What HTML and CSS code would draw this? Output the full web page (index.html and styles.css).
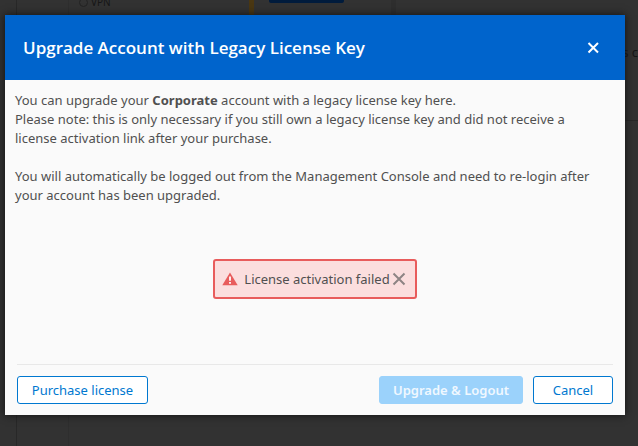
FILE: index.html
```html
<!DOCTYPE html>
<html lang="en">
<head>
<meta charset="utf-8">
<title>Upgrade Account</title>
<link rel="stylesheet" href="styles.css">
</head>
<body>
<div class="page" inert>
  <div class="rail"></div>
  <div class="tree"></div>
  <div class="options"><label class="option"><input type="radio" name="kind">VPN</label></div>
  <div class="accent"></div>
  <div class="card"><div class="card-bar"></div></div>
  <div class="gutter"></div>
  <div class="details"><p class="details-text">s c</p></div>
</div>
<div class="overlay">
  <section class="dialog" role="dialog" aria-modal="true" aria-labelledby="dialog-title">
    <header class="dialog-header">
      <h1 class="dialog-title" id="dialog-title">Upgrade Account with Legacy License Key</h1>
      <button class="icon-button" type="button" aria-label="Close">
        <svg width="12" height="12" viewBox="0 0 12 12"><path d="M1.5 1l9.5 9.5M11 1L1.5 10.5" fill="none" stroke="#fff" stroke-width="2"/></svg>
      </button>
    </header>
    <div class="dialog-body">
      <p>You can upgrade your <strong>Corporate</strong> account with a legacy license key here.<br>Please note: this is only necessary if you still own a legacy license key and did not receive a license activation link after your purchase.</p>
      <p>You will automatically be logged out from the Management Console and need to re-login after your account has been upgraded.</p>
      <div class="alert" role="alert">
        <svg width="16" height="14" viewBox="0 0 16 14"><path d="M8 .5L15.7 13.3H.3z" fill="#e85c5c"/><path d="M8 4.5v4.2M8 10v1.8" stroke="#fff" stroke-width="1.8"/></svg>
        <span class="alert-text">License activation failed</span>
        <button class="icon-button" type="button" aria-label="Dismiss">
          <svg width="14" height="14" viewBox="0 0 14 14"><path d="M1.5 1.5l11 11M12.5 1.5l-11 11" fill="none" stroke="#8d8484" stroke-width="2"/></svg>
        </button>
      </div>
    </div>
    <footer class="dialog-footer">
      <button class="button purchase" type="button">Purchase license</button>
      <button class="button primary" type="button" disabled>Upgrade &amp; Logout</button>
      <button class="button cancel" type="button">Cancel</button>
    </footer>
  </section>
</div>
</body>
</html>
```
FILE: styles.css
```css
* { box-sizing: border-box; }
body {
  margin: 0;
  min-height: 100vh;
  display: grid;
  background: #323232;
  color: #505050;
  font: 13px/19px "Noto Sans", "Open Sans", sans-serif;
}
.page, .overlay { grid-area: 1 / 1; }
.page {
  display: grid;
  grid-template-columns: 17px 52px 180px 5px 137px 5px 1fr;
}
.rail { border-right: 1px solid #282828; }
.tree { border-right: 1px solid #2e2e2e; }
.options { padding: 0 10px; height: 15px; }
.option { display: flex; align-items: center; gap: 3px; height: 4px; font-size: 10px; color: #161616; }
.option input { appearance: none; width: 9px; height: 9px; margin: 0; border: 1px solid #222; border-radius: 50%; }
.accent { height: 15px; background: #4a3712; }
.card { height: 15px; padding: 0 15px; }
.card-bar { width: 75px; height: 3px; background: #001b3c; border-radius: 0 0 2px 2px; }
.gutter { height: 15px; background: #2e2e2e; }
.details { height: 121px; padding-top: 43px; text-align: right; border-bottom: 1px solid #282828; }
.details-text { margin: 0; color: #161616; }
.overlay { padding: 15px 13px 31px 5px; }
.dialog { background: #fafafa; box-shadow: 0 0 8px #111; display: flex; flex-direction: column; height: 100%; }
.dialog-header {
  display: flex;
  align-items: center;
  justify-content: space-between;
  padding: 20px 26px 20px 18px;
  background: #0064cc;
  color: #fff;
}
.dialog-title { margin: 0; font-family: "Open Sans", sans-serif; font-size: 17px; line-height: 25px; font-weight: 600; }
.icon-button { display: flex; padding: 0; border: 0; background: none; }
.dialog-body { flex: 1; display: flex; flex-direction: column; padding: 11px 10px; }
.dialog-body p { margin: 0 0 19px; padding-right: 12px; }
.alert {
  align-self: center;
  display: flex;
  align-items: center;
  margin-top: 35px;
  padding: 0 9px 0 7px;
  height: 40px;
  border: 2px solid #e85c5c;
  border-radius: 3px;
  background: #fbdede;
}
.alert-text { margin: 0 2px 0 6px; }
.dialog-footer {
  display: flex;
  gap: 10px;
  margin: 0 12px;
  padding: 11px 0;
  border-top: 1px solid #e8e8e8;
}
.button {
  height: 28px;
  padding: 0;
  border: 1px solid #0078d0;
  border-radius: 3px;
  background: #fff;
  color: #0078d0;
  font: inherit;
}
.purchase { width: 131px; margin-right: auto; }
.primary { width: 144px; border-color: #9bd2fb; background: #9bd2fb; color: #f0f8ff; font-weight: 600; }
.cancel { width: 80px; }
```
